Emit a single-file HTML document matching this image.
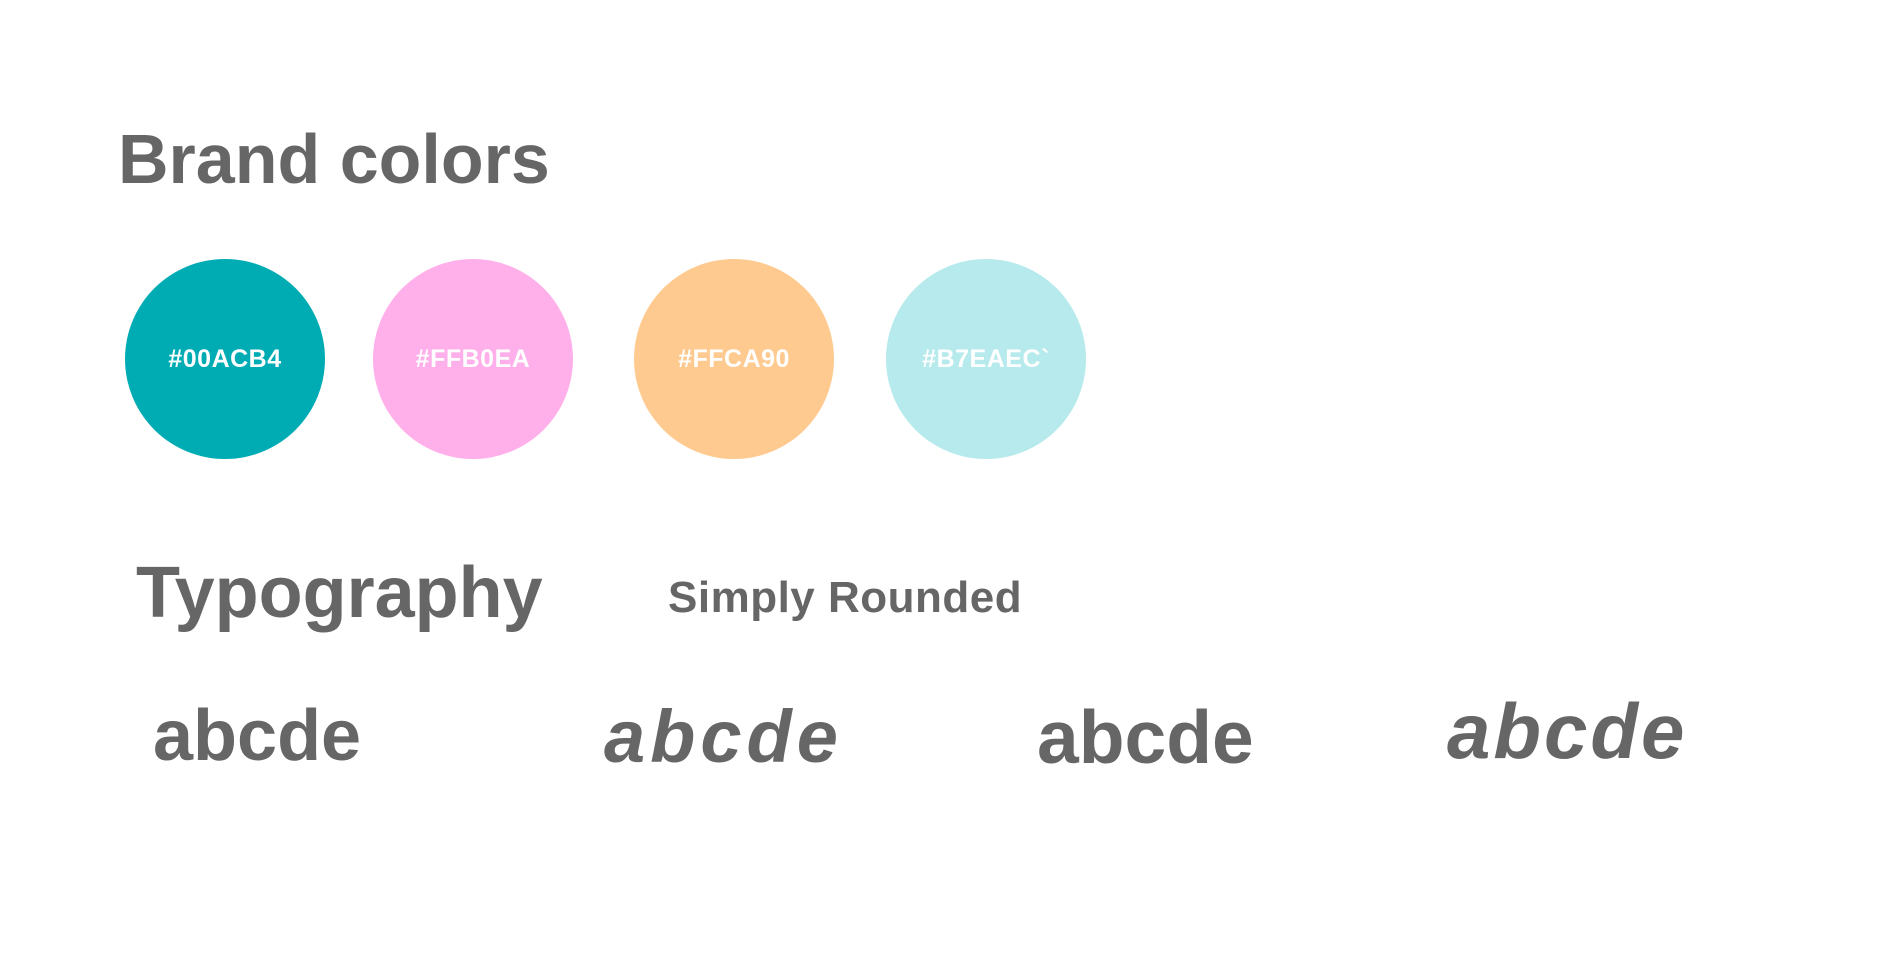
<!DOCTYPE html>
<html><head><meta charset="utf-8"><style>
html,body{margin:0;padding:0;background:#fff;width:1894px;height:963px;overflow:hidden}
body{position:relative;font-family:"Liberation Sans",sans-serif;color:#666;font-weight:bold}
.t{position:absolute;white-space:nowrap;line-height:1}
.c{position:absolute;width:200px;height:200px;border-radius:50%;top:259px;display:flex;align-items:center;justify-content:center;color:#fff;font-size:25px;font-weight:bold;letter-spacing:0.5px}
</style></head><body>
<div class="t" style="left:118px;top:124px;font-size:70px;letter-spacing:0px">Brand colors</div>
<div class="c" style="left:125px;background:#00acb4">#00ACB4</div>
<div class="c" style="left:373px;background:#ffb0ea">#FFB0EA</div>
<div class="c" style="left:634px;background:#ffca90">#FFCA90</div>
<div class="c" style="left:886px;background:#b7eaec">#B7EAEC`</div>
<div class="t" style="left:136px;top:557px;font-size:72px;letter-spacing:0px">Typography</div>
<div class="t" style="left:668px;top:576px;font-size:44px;letter-spacing:0.5px">Simply Rounded</div>
<div class="t" style="left:153px;top:700px;font-size:72px">abcde</div>
<div class="t" style="left:604px;top:700px;font-size:74px;font-style:italic;letter-spacing:5px">abcde</div>
<div class="t" style="left:1037px;top:700px;font-size:75px">abcde</div>
<div class="t" style="left:1447px;top:692px;font-size:78px;font-style:italic;letter-spacing:3px">abcde</div>
</body></html>
